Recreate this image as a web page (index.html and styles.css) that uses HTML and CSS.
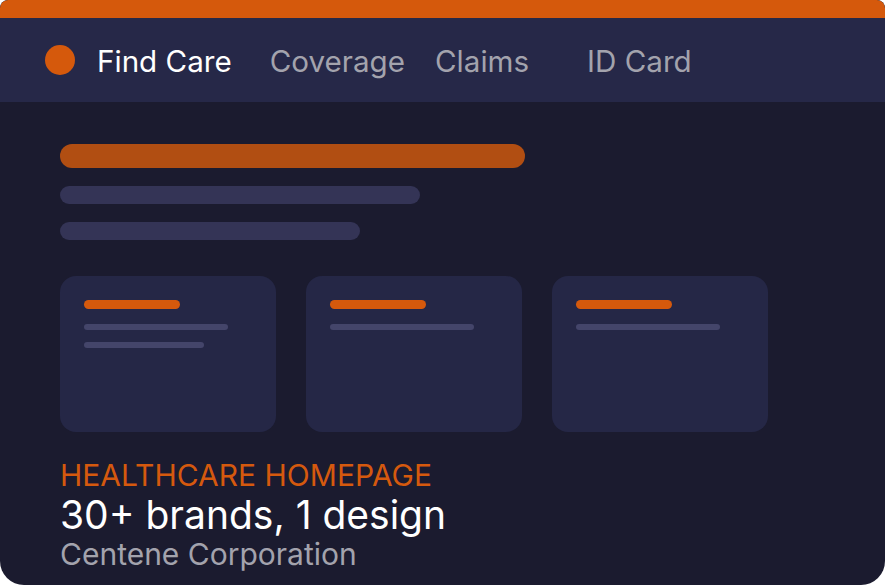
FILE: index.html
```html
<!DOCTYPE html>
<html lang="en">
<head>
<meta charset="utf-8">
<title>Healthcare Homepage</title>
<link rel="stylesheet" href="styles.css">
</head>
<body>
<div class="frame">
  <div class="topbar"></div>
  <nav class="nav">
    <span class="dot"></span>
    <span class="nav-item active">Find Care</span>
    <span class="nav-item coverage">Coverage</span>
    <span class="nav-item claims">Claims</span>
    <span class="nav-item idcard">ID Card</span>
  </nav>
  <main class="content">
    <div class="bar bar-title"></div>
    <div class="bar bar-sub1"></div>
    <div class="bar bar-sub2"></div>
    <div class="cards">
      <div class="card">
        <div class="card-head"></div>
        <div class="card-line w144"></div>
        <div class="card-line w120"></div>
      </div>
      <div class="card">
        <div class="card-head"></div>
        <div class="card-line w144"></div>
      </div>
      <div class="card">
        <div class="card-head"></div>
        <div class="card-line w144"></div>
      </div>
    </div>
    <div class="caption">
      <div class="eyebrow">HEALTHCARE HOMEPAGE</div>
      <div class="headline">30+ brands, 1 design</div>
      <div class="client">Centene Corporation</div>
    </div>
  </main>
</div>
</body>
</html>
```
FILE: styles.css
```css
html, body {
  margin: 0;
  padding: 0;
  background: #ffffff;
}
body {
  font-family: Inter, "Noto Sans", "Liberation Sans", sans-serif;
}
.frame {
  width: 885px;
  height: 585px;
  background: #1b1b2f;
  border-radius: 8px 8px 24px 24px;
  overflow: hidden;
  display: flex;
  flex-direction: column;
}
.topbar {
  height: 18px;
  background: #d5590c;
  border-radius: 8px 8px 0 0;
  flex: none;
}
.nav {
  height: 84px;
  flex: none;
  background: #262848;
  display: flex;
  align-items: center;
  padding-left: 45px;
  box-sizing: border-box;
}
.dot {
  width: 30px;
  height: 30px;
  border-radius: 50%;
  background: #d5590c;
  margin-right: 22px;
  flex: none;
}
.nav-item {
  font-size: 29.6px;
  line-height: 36px;
  color: #a3a3ad;
  white-space: nowrap;
  margin-top: 2px;
}
.nav-item.active {
  color: #ffffff;
}
.coverage { margin-left: 38px; }
.claims { margin-left: 30px; }
.idcard { margin-left: 58px; }
.content {
  padding: 42px 60px 0;
  display: flex;
  flex-direction: column;
}
.bar {
  border-radius: 12px;
}
.bar-title {
  width: 465px;
  height: 24px;
  background: #b14e12;
}
.bar-sub1 {
  width: 360px;
  height: 18px;
  margin-top: 18px;
  background: #343456;
  border-radius: 9px;
}
.bar-sub2 {
  width: 300px;
  height: 18px;
  margin-top: 18px;
  background: #343456;
  border-radius: 9px;
}
.cards {
  display: flex;
  gap: 30px;
  margin-top: 36px;
}
.card {
  width: 216px;
  height: 156px;
  box-sizing: border-box;
  padding: 24px 24px 0;
  background: #252746;
  border-radius: 16px;
  display: flex;
  flex-direction: column;
}
.card-head {
  width: 96px;
  height: 9px;
  border-radius: 5px;
  background: #d5590c;
}
.card-line {
  height: 6px;
  border-radius: 3px;
  background: #44456a;
  margin-top: 12px;
}
.card-head + .card-line {
  margin-top: 15px;
}
.w144 { width: 144px; }
.w120 { width: 120px; }
.caption {
  margin-top: 25px;
  display: flex;
  flex-direction: column;
}
.eyebrow {
  font-size: 30px;
  line-height: 36px;
  color: #d5590e;
  white-space: nowrap;
}
.headline {
  font-size: 39px;
  line-height: 43px;
  color: #ffffff;
  white-space: nowrap;
}
.client {
  font-size: 30px;
  line-height: 36px;
  color: #a3a3ad;
  white-space: nowrap;
}
```
